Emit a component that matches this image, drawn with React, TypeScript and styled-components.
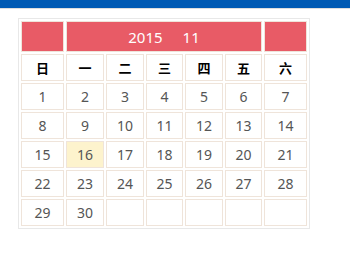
import styled, { createGlobalStyle } from "styled-components";

const GlobalStyle = createGlobalStyle`
  body {
    margin: 0;
    background: #ffffff;
    font-family: "Noto Sans", "Noto Sans CJK SC", sans-serif;
  }
`;

const TopBar = styled.div`
  height: 8px;
  background: #005ab4;
  border-bottom: 1px solid #dedede;
`;

const Page = styled.div`
  padding: 9px 0 0 18px;
`;

const Calendar = styled.div`
  display: inline-grid;
  grid-template-columns: 43px 38px 38px 37px 38px 37px 43px;
  grid-template-rows: 31px;
  grid-auto-rows: 27px;
  gap: 2px;
  padding: 2px;
  border: 1px solid #e8e8e8;
`;

const Cell = styled.div<{ $today?: boolean }>`
  box-sizing: border-box;
  border: 1px solid #efe4da;
  display: flex;
  align-items: center;
  justify-content: center;
  font-size: 14px;
  color: #555555;
  background: ${(p) => (p.$today ? "#fdf3cd" : "#ffffff")};
`;

const HeadCell = styled.div<{ $span?: number }>`
  box-sizing: border-box;
  grid-column: span ${(p) => p.$span ?? 1};
  border: 1px solid #efe4da;
  background: #e85b66;
  display: flex;
  align-items: center;
  justify-content: center;
  color: #ffffff;
  font-size: 15px;
`;

const Month = styled.span`
  margin-left: 20px;
`;

const WeekDay = styled(Cell)`
  font-family: "Noto Sans CJK SC", sans-serif;
  font-weight: bold;
  font-size: 13px;
  color: #000000;
`;

const weekDays = ["日", "一", "二", "三", "四", "五", "六"];

export default function App() {
  const days: (number | null)[] = [];
  for (let d = 1; d <= 30; d++) days.push(d);
  while (days.length < 35) days.push(null);

  return (
    <>
      <GlobalStyle />
      <TopBar />
      <Page>
        <Calendar>
          <HeadCell />
          <HeadCell $span={5}>
            2015<Month>11</Month>
          </HeadCell>
          <HeadCell />
          {weekDays.map((w) => (
            <WeekDay key={w}>{w}</WeekDay>
          ))}
          {days.map((d, i) => (
            <Cell key={i} $today={d === 16}>
              {d}
            </Cell>
          ))}
        </Calendar>
      </Page>
    </>
  );
}
